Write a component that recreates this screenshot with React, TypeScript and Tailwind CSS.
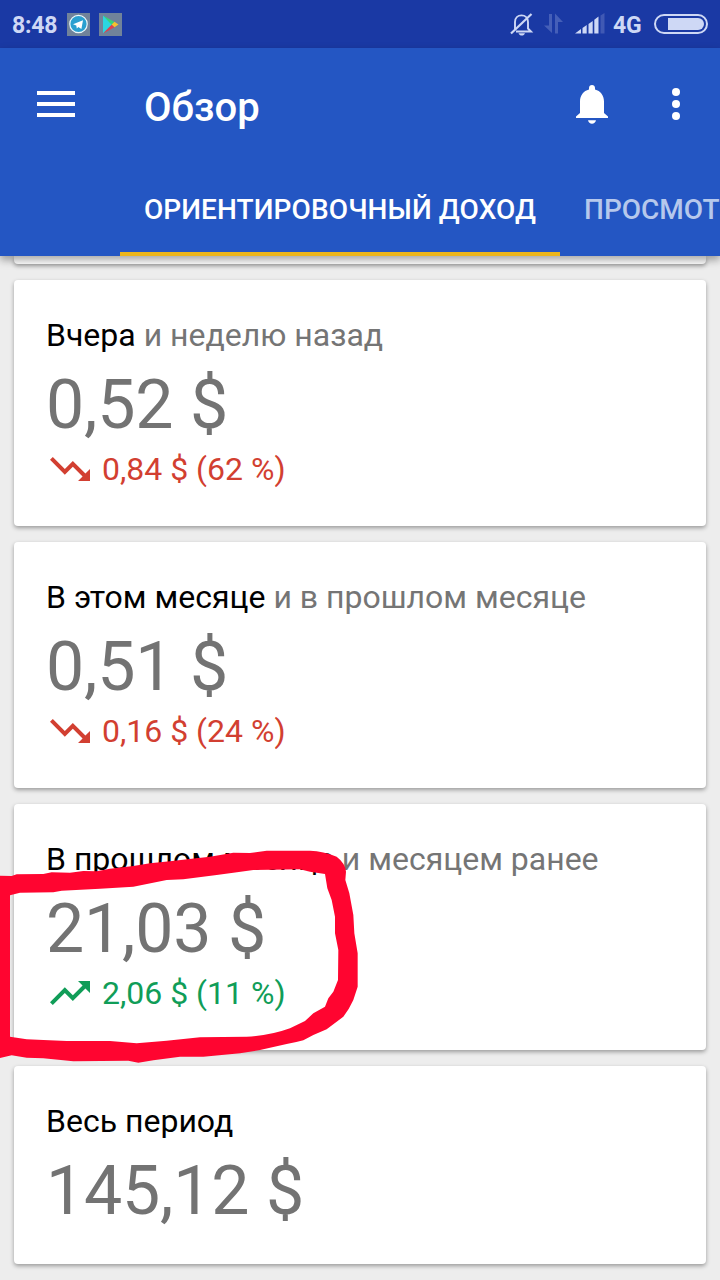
type Trend = "up" | "down";

type Report = {
  title: string;
  compare?: string;
  amount: string;
  trend?: Trend;
  delta?: string;
};

const reports: Report[] = [
  { title: "Вчера", compare: "и неделю назад", amount: "0,52 $", trend: "down", delta: "0,84 $ (62 %)" },
  { title: "В этом месяце", compare: "и в прошлом месяце", amount: "0,51 $", trend: "down", delta: "0,16 $ (24 %)" },
  { title: "В прошлом месяце", compare: "и месяцем ранее", amount: "21,03 $", trend: "up", delta: "2,06 $ (11 %)" },
  { title: "Весь период", amount: "145,12 $" },
];

function StatusBar() {
  return (
    <div className="flex h-12 items-center bg-[#1a39a4] text-[#ced8f5]">
      <span className="ml-3 w-[55px] pt-0.5 text-[23px] font-bold leading-none tracking-[-0.2px] whitespace-nowrap">8:48</span>
      <svg className="h-[23px] w-[23px]" viewBox="0 0 23 23">
        <path fill="#71839a" d="M0 0h23v23H0z" />
        <circle cx="11.5" cy="11" r="8.7" fill="#2ba0d0" stroke="#eef8fb" strokeWidth="1.2" />
        <path fill="#fff" d="M6 11.3 16 7.2 14.4 16l-3-2.1-1.6 1.6-.5-3z" />
      </svg>
      <svg className="ml-[9px] h-[23px] w-[23px]" viewBox="0 0 23 23">
        <path fill="#71839a" d="M0 0h23v23H0z" />
        <path fill="#2bd6e0" d="M4 2.5v18l9-9z" />
        <path fill="#35d47a" d="m4 2.5 11.5 6.4-2.8 2.8z" />
        <path fill="#e0404f" d="m4 20.5 8.7-8.8 2.8 2.6z" />
        <path fill="#f7c12d" d="m12.7 11.6 2.8-2.8 4 2.8-4 2.7z" />
      </svg>

      <svg className="ml-auto h-[24px] w-[24px]" viewBox="0 0 24 24" fill="none" stroke="currentColor" strokeWidth="1.9">
        <path d="M5 17V10c0-4 2.8-6.600 6.500-6.600S18 6 18 10v6.500l3 3H6" />
        <path d="M1 21.500 21.500 2" strokeWidth="2.200" />
        <path fill="currentColor" stroke="none" d="M8.500 21.200h6.500c-.6 1.600-1.700 2.300-3.200 2.300s-2.700-.7-3.300-2.300z" />
      </svg>
      <svg className="ml-[9px] h-[22px] w-[22px] text-[#455fb8]" viewBox="0 0 22 22" fill="currentColor">
        <path d="M6 1h3v19L1 12.500h5z" />
        <path d="M15 20.500h-3V.500L20 9h-5z" />
      </svg>
      <svg className="ml-[10px] h-[22px] w-[30px]" viewBox="0 0 30 22" fill="currentColor">
        <path d="M0 20.500 6 16v4.500zM7.500 15l4.200-3v8.500H7.500zM13.500 11l4.200-3v12.500h-4.200zM19.300 6.700l4.200-3.200v17h-4.200z" />
        <path fill="#4059b4" d="m25.500 2.500 4-2.500v20.500h-4z" />
      </svg>
      <span className="ml-[8px] w-[31px] pt-0.5 text-[23px] font-bold leading-none tracking-[-0.3px]">4G</span>
      <div className="mr-3 ml-[10px] flex h-5 w-[54px] justify-end rounded-full border-2 border-[#ced8f5] p-[2px]">
        <div className="h-full w-[36px] rounded-r-full bg-[#ced8f5]" />
      </div>
    </div>
  );
}

function AppBar() {
  return (
    <header className="relative z-10 h-[208px] bg-[#2456c3] text-white shadow-[0_4px_8px_rgba(0,0,0,0.35)]">
      <div className="flex h-28 items-center">
        <div className="ml-[37px] flex w-[107px] flex-col gap-[7px] pb-px">
          <div className="h-1 w-[38px] bg-white" />
          <div className="h-1 w-[38px] bg-white" />
          <div className="h-1 w-[38px] bg-white" />
        </div>
        <h1 className="mt-[7px] text-[40px] font-medium leading-none">Обзор</h1>
        <svg className="ml-auto h-[39px] w-8" viewBox="0 0 32 39" fill="white">
          <path d="M16 0c-1.800 0-3 1.300-3 3v1.500C7.500 5.800 4 10.500 4 16.500V28l-4 3.500V33h32v-1.500L28 28V16.500c0-6-3.500-10.700-9-12V3c0-1.700-1.200-3-3-3zM12 35.200c.5 2.200 2 3.600 4 3.600s3.500-1.400 4-3.600z" />
        </svg>
        <div className="mr-10 ml-16 flex flex-col gap-1">
          <div className="h-2 w-2 rounded-full bg-white" />
          <div className="h-2 w-2 rounded-full bg-white" />
          <div className="h-2 w-2 rounded-full bg-white" />
        </div>
      </div>
      <nav className="flex h-24 overflow-hidden pl-[120px] text-[28px] font-medium whitespace-nowrap">
        <div className="flex w-[440px] shrink-0 items-center justify-center border-b-4 border-[#ecb61c] pt-[7px] tracking-[0.1px]">
          ОРИЕНТИРОВОЧНЫЙ ДОХОД
        </div>
        <div className="flex shrink-0 items-center px-6 pt-[3px] text-[#b6c8ec]">ПРОСМОТРЫ</div>
      </nav>
    </header>
  );
}

function TrendIcon({ trend }: { trend: Trend }) {
  return (
    <svg className={`ml-1 h-6 w-10 ${trend === "up" ? "-scale-y-100" : ""}`} viewBox="2 6 20 12" fill="currentColor">
      <path d="m16 18 2.290-2.290-4.880-4.880-4 4L2 7.410 3.410 6l6 6 4-4 6.300 6.290L22 12v6z" />
    </svg>
  );
}

function ReportCard({ report }: { report: Report }) {
  const { title, compare, amount, trend, delta } = report;

  return (
    <section
      className={`rounded bg-white px-8 pt-9 shadow-[0_2px_4px_rgba(0,0,0,0.35)] ${delta ? "h-[246px]" : "h-[198px]"}`}
    >
      <h2 className="text-[32px] leading-[38px] whitespace-nowrap text-black">
        {title} {compare && <span className="text-[#757575]">{compare}</span>}
      </h2>
      <p className="mt-[11px] text-[68px] leading-[80px] tracking-[-0.2px] text-[#737373]">{amount}</p>
      {trend && (
        <div
          className={`mt-[5px] flex items-center gap-3 text-[32px] leading-[38px] ${trend === "up" ? "text-[#109d58]" : "text-[#d23f31]"}`}
        >
          <TrendIcon trend={trend} />
          <span>{delta}</span>
        </div>
      )}
    </section>
  );
}

// Hand-drawn marker loop around last month's income
function MarkerLoop() {
  return (
    <svg className="absolute top-[820px] left-0 z-20 h-[260px] w-[380px]" viewBox="0 0 1140 780">
      <path
        fill="#ff0530"
        fillRule="evenodd"
        d="M0 167 35 168 50 163 130 162 155 157 210 158 250 153 290 154 330 146 400 138 450 130 510 124 575 116 630 110 700 98 750 99 800 92 930 92Q970 93 1010 110 1036 130 1038 155L1036 180 1048 220 1060 285 1063 340 1073 400V500L1060 540Q1048 567 1030 590L1000 613 980 628 940 645 910 661Q885 668 860 672L780 690 720 700 610 710H540L460 721 415 728 385 722 220 724 130 715 80 713 35 706 0 714Z
        M30 226V650L80 658 130 660 200 663H330L410 670 500 662 600 652 740 650Q810 647 870 625L915 603 940 580 975 560 985 535 1000 515 1014 480 1015 390 1005 340V290L995 240 982 205 975 162 930 155 900 148 760 150 700 158 650 165 550 178 500 180 400 200 300 206 185 212 160 217 60 218Z"
      />
    </svg>
  );
}

export default function App() {
  return (
    <div className="relative h-[1280px] w-[720px] overflow-hidden bg-[#ededed] font-[Roboto,sans-serif]">
      <StatusBar />
      <AppBar />
      <main className="flex flex-col gap-4 px-[14px]">
        <div className="h-2 rounded-b bg-white shadow-[0_2px_4px_rgba(0,0,0,0.35)]" />
        {reports.map((report) => (
          <ReportCard key={report.title} report={report} />
        ))}
      </main>
      <MarkerLoop />
    </div>
  );
}
